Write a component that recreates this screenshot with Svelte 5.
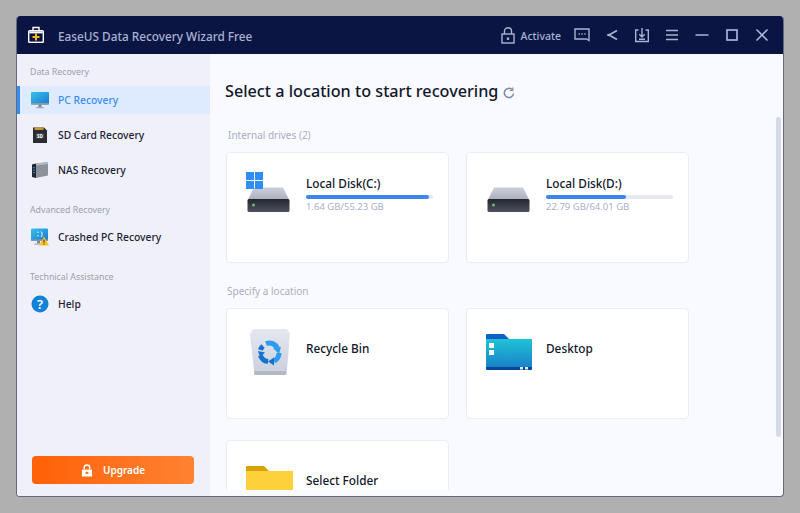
<script>
  const recovery = [
    { id: 'pc', label: 'PC Recovery', active: true },
    { id: 'sd', label: 'SD Card Recovery' },
    { id: 'nas', label: 'NAS Recovery' }
  ];

  const drives = [
    { name: 'Local Disk(C:)', stats: '1.64 GB/55.23 GB', used: 97, windows: true },
    { name: 'Local Disk(D:)', stats: '22.79 GB/64.01 GB', used: 63, windows: false }
  ];
</script>

<div class="page">
  <div class="window">
    <header class="titlebar">
      <svg class="logo" viewBox="0 0 18 18">
        <path d="M6 4V1.5h6V4" fill="none" stroke="#fff" stroke-width="1.4" />
        <rect x="1" y="4" width="16" height="13" rx="1.5" fill="#fff" />
        <rect x="2.4" y="5.4" width="13.2" height="10.2" fill="#0b1543" />
        <rect x="2.4" y="5.4" width="13.2" height="2" fill="#fff" />
        <path d="M8 7.5h2v2.5h2.5v2H10v2.500H8V12H5.500v-2H8z" fill="#f9b71c" />
      </svg>
      <span class="app-name">EaseUS Data Recovery Wizard Free</span>

      <div class="actions">
        <svg class="lock" viewBox="0 0 14 17" fill="none" stroke="currentColor" stroke-width="1.4">
          <rect x="1" y="7" width="12" height="9" />
          <path d="M3.500 7V4a3.500 3.200 0 0 1 7 0v3" />
          <rect x="5.800" y="10.500" width="2.400" height="2.400" fill="currentColor" stroke="none" />
        </svg>
        <span class="activate">Activate</span>
        <button type="button" aria-label="Feedback">
          <svg viewBox="0 0 16 16" fill="none" stroke="currentColor" stroke-width="1.4">
            <path d="M1 2h14v11.500l-2.500-1.500H1z" />
            <path d="M4.500 7h1.300M7.400 7h1.300M10.300 7h1.300" />
          </svg>
        </button>
        <button type="button" aria-label="Share">
          <svg viewBox="0 0 16 16" fill="none" stroke="currentColor" stroke-width="1.800">
            <path d="M13 3.500 5 8l8 4.500" />
            <circle cx="4.500" cy="8" r="1.300" fill="currentColor" stroke="none" />
          </svg>
        </button>
        <button type="button" aria-label="Import">
          <svg viewBox="0 0 16 16" fill="none" stroke="currentColor" stroke-width="1.400">
            <path d="M4.500 3H1.700v11.500h12.600V3h-2.800" />
            <path d="M8 1v8.500M5.300 7.200 8 10l2.700-2.800M5 12.200h6" />
          </svg>
        </button>
        <button type="button" aria-label="Menu">
          <svg viewBox="0 0 16 16" fill="none" stroke="currentColor" stroke-width="1.600">
            <path d="M2 3.500h12M2 8h12M2 12.500h12" />
          </svg>
        </button>
        <button type="button" aria-label="Minimize">
          <svg viewBox="0 0 16 16" fill="none" stroke="currentColor" stroke-width="1.500">
            <path d="M1.500 8h13" />
          </svg>
        </button>
        <button type="button" aria-label="Maximize">
          <svg viewBox="0 0 16 16" fill="none" stroke="currentColor" stroke-width="1.700">
            <rect x="3" y="3" width="10" height="10" />
          </svg>
        </button>
        <button type="button" aria-label="Close">
          <svg viewBox="0 0 16 16" fill="none" stroke="currentColor" stroke-width="1.600">
            <path d="m2.500 2.500 11 11M13.500 2.500l-11 11" />
          </svg>
        </button>
      </div>
    </header>

    <div class="body">
      <aside class="sidebar">
        <div class="group-label first">Data Recovery</div>
        {#each recovery as item}
          <div class="nav-item" class:active={item.active}>
            {#if item.id === 'pc'}
              <svg viewBox="0 0 18 18">
                <defs>
                  <linearGradient id="screen" x1="0" y1="0" x2="1" y2="1">
                    <stop offset="0" stop-color="#35c3ea" />
                    <stop offset="1" stop-color="#1b78cf" />
                  </linearGradient>
                </defs>
                <rect x="0" y="1" width="18" height="12.500" rx="1" fill="url(#screen)" />
                <rect x="0" y="12" width="18" height="1.500" fill="#8b97a8" />
                <rect x="7.500" y="13.500" width="3" height="2.500" fill="#7d8896" />
                <rect x="5" y="16" width="8" height="1.200" rx="0.500" fill="#a0aab8" />
              </svg>
            {:else if item.id === 'sd'}
              <svg viewBox="0 0 18 18">
                <path d="M2 1.500h11l3 3V17H2z" fill="#2a2c33" />
                <path d="M3.500 1.500h9v2.500h-9z" fill="#c69a3a" />
                <rect x="5" y="7.500" width="8" height="5" fill="#4a4d57" />
                <text x="9" y="11.600" class="sd-text" text-anchor="middle">SD</text>
              </svg>
            {:else}
              <svg viewBox="0 0 18 18">
                <path d="M5 2.500 17 1v13.500L5 17z" fill="#8b929c" />
                <path d="M5 2.500 17 1v2L5 4.500z" fill="#b4bac2" />
                <path d="M1 3.500 5 2.500V17l-4-1z" fill="#23252c" />
                <path d="M2.300 6h1.400v1.300H2.300zM2.300 8.500h1.400v1.300H2.300zM2.300 11h1.400v1.300H2.300z" fill="#28a9e8" />
              </svg>
            {/if}
            <span>{item.label}</span>
          </div>
        {/each}

        <div class="group-label">Advanced Recovery</div>
        <div class="nav-item">
          <svg viewBox="0 0 18 18">
            <rect x="0" y="0.500" width="17" height="12" rx="1" fill="url(#screen)" />
            <rect x="0" y="11.500" width="17" height="1.500" fill="#8b97a8" />
            <path d="M7 3.500v1.500M7 7v1.500M10 3.500c1.500 1.500 1.500 4 0 5.500" fill="none" stroke="#fff" stroke-width="1" />
            <rect x="6" y="13" width="3" height="2.500" fill="#7d8896" />
            <rect x="3.500" y="15.500" width="8" height="1.200" fill="#a0aab8" />
            <path d="M13 8.500 18 17.500H8z" fill="#fbc02d" />
            <path d="M13 11.500v3.200M13 15.500v1" stroke="#3a2c05" stroke-width="1" />
          </svg>
          <span>Crashed PC Recovery</span>
        </div>

        <div class="group-label">Technical Assistance</div>
        <div class="nav-item">
          <svg viewBox="0 0 18 18">
            <circle cx="9" cy="9" r="8.500" fill="#1083d8" />
            <text x="9" y="13.500" class="help-mark" text-anchor="middle">?</text>
          </svg>
          <span>Help</span>
        </div>

        <button type="button" class="upgrade">
          <svg viewBox="0 0 13 14" fill="none" stroke="#fff" stroke-width="1.500">
            <path d="M3.500 6V4a3 3 0 0 1 6 0v2" />
            <rect x="1" y="6" width="11" height="7.500" fill="#fff" stroke="none" />
            <rect x="5" y="8.500" width="3" height="2.200" fill="#ff6f1e" stroke="none" />
          </svg>
          Upgrade
        </button>
      </aside>

      <main class="main">
        <div class="heading">
          <h1>Select a location to start recovering</h1>
          <svg class="refresh" viewBox="0 0 12 12" fill="none" stroke="#7d88ab" stroke-width="1.500">
            <path d="M10.500 6.500A4.600 4.600 0 1 1 9 2.500" />
            <path d="M9.800 0.500v3h-3" stroke-width="1.200" />
          </svg>
        </div>

        <div class="section-label">Internal drives (2)</div>
        <div class="cards">
          {#each drives as drive}
            <div class="card">
              <svg class="card-icon" viewBox="0 0 48 48">
                <defs>
                  <linearGradient id="drive-top" x1="0" y1="0" x2="0" y2="1">
                    <stop offset="0" stop-color="#cdd0dc" />
                    <stop offset="1" stop-color="#a9adba" />
                  </linearGradient>
                  <linearGradient id="drive-front" x1="0" y1="0" x2="0" y2="1">
                    <stop offset="0" stop-color="#23262d" />
                    <stop offset="1" stop-color="#4d5260" />
                  </linearGradient>
                </defs>
                <path d="M8 14.500h29l6.500 13h-42z" fill="url(#drive-top)" />
                <rect x="1.500" y="26" width="42" height="13" rx="1.500" fill="url(#drive-front)" />
                <circle cx="7.500" cy="32" r="1.500" fill="#5ec26a" />
                {#if drive.windows}
                  <path d="M0-1h8v8H0zM9-1h8v8H9zM0 8h8v8H0zM9 8h8v8H9z" fill="#2f8df5" />
                {/if}
              </svg>
              <div class="drive-info">
                <div class="name">{drive.name}</div>
                <div class="bar"><div class="fill" style="width: {drive.used}%"></div></div>
                <div class="stats">{drive.stats}</div>
              </div>
            </div>
          {/each}
        </div>

        <div class="section-label second">Specify a location</div>
        <div class="cards">
          <div class="card">
            <svg class="card-icon" viewBox="0 0 48 48">
              <defs>
                <linearGradient id="bin" x1="0" y1="0" x2="0" y2="1">
                  <stop offset="0" stop-color="#e4e8f0" />
                  <stop offset="1" stop-color="#c9cfdd" />
                </linearGradient>
              </defs>
              <path d="M7 0h34l3 5-3.500 41h-32L4 5z" fill="url(#bin)" />
              <path d="M8 42h32l-.4 4H8.400z" fill="#b3b8c4" />
              <g fill="none" stroke-width="5">
                <path d="M20 14.500a9 9 0 0 1 11.500 5" stroke="#2d9bf0" />
                <path d="M33 24a9 9 0 0 1-5 8" stroke="#2d9bf0" />
                <path d="M22 32.500a9 9 0 0 1-7.500-6" stroke="#1273cf" />
                <path d="M14.500 21a9 9 0 0 1 2.500-4" stroke="#1273cf" />
              </g>
              <path d="M27 19l8-1-2 7z" fill="#2d9bf0" />
              <path d="M28 28.500v8l-6-4z" fill="#1273cf" />
              <path d="M12 22l7 1.500-5 5z" fill="#1273cf" />
            </svg>
            <div class="name plain">Recycle Bin</div>
          </div>
          <div class="card">
            <svg class="card-icon" viewBox="0 0 48 48">
              <defs>
                <linearGradient id="desk" x1="0" y1="0" x2="0" y2="1">
                  <stop offset="0" stop-color="#1fc4d6" />
                  <stop offset="1" stop-color="#1a80c8" />
                </linearGradient>
              </defs>
              <path d="M0 6a1 1 0 0 1 1-1h17l5 5v4H0z" fill="#0f62c4" />
              <path d="M0 10h46v29H0z" fill="url(#desk)" />
              <path d="M0 38h46v2a1 1 0 0 1-1 1H1a1 1 0 0 1-1-1z" fill="#05489a" />
              <path d="M3 14h5v5H3zM3 21h5v5H3z" fill="#fff" />
              <path d="M34 38h3v2.500h-3zM39 38h3v2.500h-3z" fill="#dfeefc" />
            </svg>
            <div class="name plain">Desktop</div>
          </div>
          <div class="card">
            <svg class="card-icon" viewBox="0 0 48 48">
              <path d="M0 6a1 1 0 0 1 1-1h17l5 5v4H0z" fill="#d6a408" />
              <path d="M0 10h47v32H0z" fill="#fdd13c" />
            </svg>
            <div class="name plain">Select Folder</div>
          </div>
        </div>

        <div class="scrollbar"></div>
      </main>
    </div>
  </div>
</div>

<style>
  :global(body) {
    margin: 0;
    background: #b0b0b0;
    overflow: hidden;
  }

  .page {
    height: 513px;
    padding: 16px;
    box-sizing: border-box;
    font-family: "Noto Sans", "Open Sans", sans-serif;
  }

  .window {
    height: 481px;
    display: flex;
    flex-direction: column;
    box-sizing: border-box;
    border: 1px solid #666a7c;
    border-top: none;
    border-radius: 4px;
    overflow: hidden;
    background: #f9faff;
  }

  /* Title bar */
  .titlebar {
    height: 38px;
    flex-shrink: 0;
    display: flex;
    align-items: center;
    background: #0b1543;
    color: #a8b2d2;
  }

  .logo {
    width: 18px;
    height: 18px;
    margin-left: 10px;
  }

  .app-name {
    margin: 2px 0 0 13px;
    font-size: 11.800px;
    font-weight: 500;
  }

  .actions {
    margin-left: auto;
    margin-right: 6px;
    display: flex;
    align-items: center;
  }

  .lock {
    width: 14px;
    height: 17px;
    margin-right: 6px;
  }

  .activate {
    margin: 2px 6px 0 0;
    font-size: 10.500px;
    font-weight: 500;
  }

  .actions button {
    width: 30px;
    height: 30px;
    padding: 0;
    display: flex;
    align-items: center;
    justify-content: center;
    border: none;
    background: transparent;
    color: inherit;
  }

  .actions button svg {
    width: 16px;
    height: 16px;
  }

  /* Sidebar */
  .body {
    flex: 1;
    min-height: 0;
    display: flex;
  }

  .sidebar {
    width: 193px;
    flex-shrink: 0;
    display: flex;
    flex-direction: column;
    background: #eff0f9;
  }

  .group-label {
    margin: 15px 0 3px 13px;
    font-size: 8.800px;
    line-height: 14px;
    color: #9b9fae;
  }

  .group-label.first {
    margin-top: 11px;
    margin-bottom: 7px;
  }

  .nav-item {
    height: 35px;
    display: flex;
    align-items: center;
    gap: 9px;
    padding-left: 14px;
    box-sizing: border-box;
    font-size: 10.300px;
    font-weight: 500;
    color: #1c2233;
  }

  .nav-item svg {
    width: 18px;
    height: 18px;
    flex-shrink: 0;
  }

  .nav-item.active {
    height: 28px;
    margin-bottom: 3.500px;
    background: #deebfe;
    box-shadow: inset 3px 0 0 #2f8df5, inset 1px 0 0 #eff0f9;
    color: #3a8cf0;
  }

  .sd-text {
    font-size: 4.500px;
    font-weight: 700;
    fill: #fff;
  }

  .help-mark {
    font-size: 13px;
    font-weight: 600;
    fill: #fff;
  }

  .upgrade {
    margin: auto 16px 12px 15px;
    height: 28px;
    display: flex;
    align-items: center;
    justify-content: center;
    gap: 10px;
    border: none;
    border-radius: 4px;
    background: linear-gradient(90deg, #ff6107, #ff8232);
    color: #fff;
    font: 600 10px "Noto Sans", sans-serif;
  }

  .upgrade svg {
    width: 12px;
    height: 13px;
  }

  /* Main */
  .main {
    flex: 1;
    min-width: 0;
    position: relative;
    height: 436px;
    padding-left: 15px;
    overflow: hidden;
  }

  .heading {
    height: 26px;
    margin-top: 24px;
    display: flex;
    align-items: center;
    gap: 5px;
  }

  h1 {
    margin: 0;
    font-size: 16.200px;
    font-weight: 500;
    color: #12172a;
    white-space: nowrap;
  }

  .refresh {
    width: 12px;
    height: 12px;
    margin-top: 3px;
  }

  .section-label {
    margin: 24px 0 10px 3px;
    font-size: 10px;
    line-height: 14px;
    color: #a9adbf;
  }

  .section-label.second {
    margin: 21px 0 10px 2px;
  }

  .cards {
    display: grid;
    grid-template-columns: 223px 223px;
    column-gap: 17px;
    row-gap: 21px;
    margin-left: 1px;
  }

  .card {
    height: 111px;
    display: flex;
    align-items: flex-start;
    box-sizing: border-box;
    padding: 20px 0 0 19px;
    background: #fff;
    border: 1px solid #ebedf5;
    border-radius: 4px;
  }

  .card-icon {
    width: 48px;
    height: 48px;
    flex-shrink: 0;
    overflow: visible;
  }

  .drive-info {
    width: 127px;
    margin-left: 12px;
    padding-top: 2px;
  }

  .name {
    font-size: 11.800px;
    font-weight: 500;
    line-height: 17px;
    color: #12172a;
    white-space: nowrap;
  }

  .name.plain {
    margin: 11px 0 0 12px;
  }

  .bar {
    height: 4px;
    margin-top: 3px;
    border-radius: 2px;
    background: #e6e9f3;
  }

  .fill {
    height: 100%;
    border-radius: 2px;
    background: #3c87f2;
  }

  .stats {
    margin-top: 1px;
    font-size: 9.500px;
    line-height: 14px;
    color: #a8b0cc;
  }

  .scrollbar {
    position: absolute;
    top: 63px;
    right: 2px;
    width: 5px;
    height: 320px;
    border-radius: 3px;
    background: #d5daea;
  }
</style>
